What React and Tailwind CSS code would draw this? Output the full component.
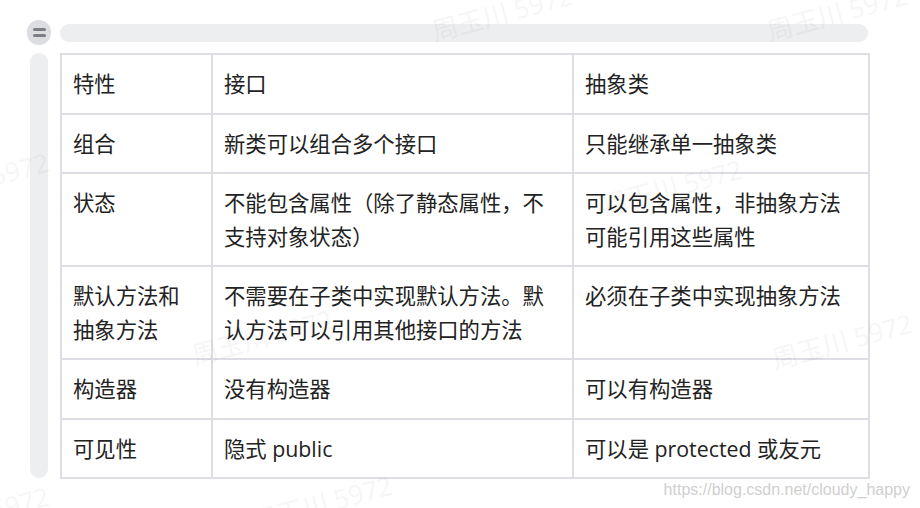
import React from 'react';

const rows = [
  ['特性', '接口', '抽象类'],
  ['组合', '新类可以组合多个接口', '只能继承单一抽象类'],
  ['状态', '不能包含属性（除了静态属性，不支持对象状态）', '可以包含属性，非抽象方法可能引用这些属性'],
  ['默认方法和抽象方法', '不需要在子类中实现默认方法。默认方法可以引用其他接口的方法', '必须在子类中实现抽象方法'],
  ['构造器', '没有构造器', '可以有构造器'],
  ['可见性', '隐式 public', '可以是 protected 或友元'],
];

const marks = [
  { t: '周玉川 5972', c: 'left-[430px] top-[-6px]' },
  { t: '周玉川 5972', c: 'left-[765px] top-[-6px]' },
  { t: '5972', c: 'left-[-10px] top-[150px]' },
  { t: '周玉川 5972', c: 'left-[600px] top-[168px]' },
  { t: '周玉川 5972', c: 'left-[190px] top-[318px]' },
  { t: '周玉川 5972', c: 'left-[770px] top-[322px]' },
  { t: '5972', c: 'left-[-10px] top-[484px]' },
  { t: '周玉川 5972', c: 'left-[250px] top-[484px]' },
];

export default function App() {
  return (
    <div className="relative w-[920px] h-[508px] overflow-hidden bg-white" style={{ fontFamily: '"Open Sans", "Noto Sans CJK SC", sans-serif' }}>
      <div className="flex flex-col gap-[8px] pl-[27px] pt-[20px]">
        {/* top row */}
        <div className="flex items-center gap-[9px]">
          <div className="w-[24px] h-[25px] rounded-full bg-[#dcdde1] flex flex-col items-center justify-center gap-[3px]">
            <span className="block w-[13px] h-[3px] rounded-full bg-[#7c7e86]" />
            <span className="block w-[13px] h-[3px] rounded-full bg-[#7c7e86]" />
          </div>
          <div className="w-[808px] h-[18px] rounded-full bg-[#edeef0]" />
        </div>

        {/* body */}
        <div className="flex gap-[9px]">
          <div className="w-[24px] flex justify-center">
            <div className="w-[18px] h-[425px] rounded-full bg-[#edeef0]" />
          </div>
          <table className="table-fixed border-collapse w-[808px] text-[21.33px] leading-[33.5px] text-[#222]">
            <colgroup>
              <col className="w-[151px]" />
              <col className="w-[361px]" />
              <col className="w-[296px]" />
            </colgroup>
            <tbody>
              {rows.map((r, i) => (
                <tr key={i}>
                  {r.map((c, j) => (
                    <td key={j} className="border-2 border-[#dddde3] px-[11px] py-[12px] align-top">
                      {c}
                    </td>
                  ))}
                </tr>
              ))}
            </tbody>
          </table>
        </div>
      </div>

      {/* watermarks */}
      {marks.map((m, i) => (
        <div
          key={i}
          className={`pointer-events-none absolute ${m.c} -rotate-[15deg] text-[26px] text-[#000] opacity-[0.03] whitespace-nowrap`}
        >
          {m.t}
        </div>
      ))}
      <div className="pointer-events-none absolute right-[10px] bottom-[6px] text-[16px] text-[#cfcfcf]" style={{ fontFamily: '"Liberation Sans", sans-serif' }}>
        https://blog.csdn.net/cloudy_happy
      </div>
    </div>
  );
}
